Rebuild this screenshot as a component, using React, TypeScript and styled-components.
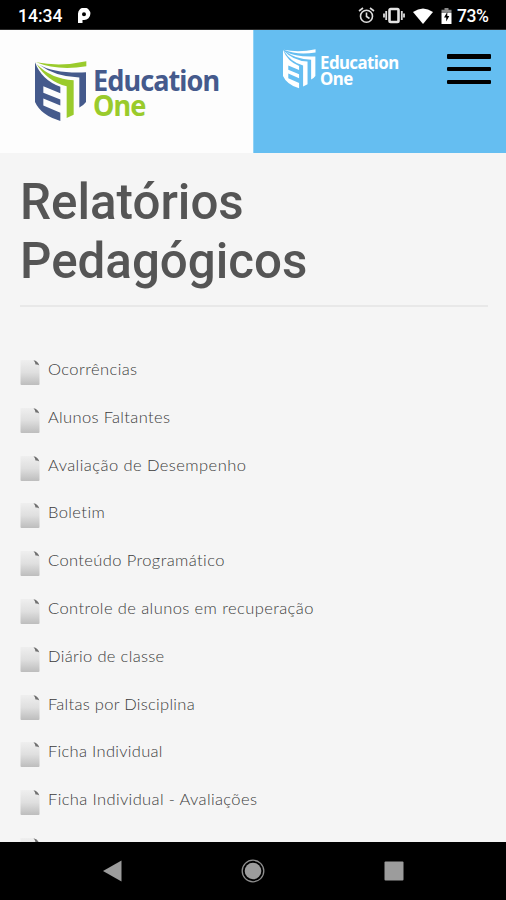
import React from "react";
import styled, { createGlobalStyle } from "styled-components";

const GlobalStyle = createGlobalStyle`
  *, *::before, *::after { box-sizing: border-box; }
  html, body { margin: 0; padding: 0; background: #000; }
  body { font-family: Roboto, "Liberation Sans", sans-serif; }
`;

const Screen = styled.div`
  width: 506px;
  height: 900px;
  display: flex;
  flex-direction: column;
  overflow: hidden;
  background: #f5f5f5;
`;

const StatusBar = styled.div`
  flex: none;
  height: 30px;
  padding: 2px 16px 0 18px;
  display: flex;
  align-items: center;
  justify-content: space-between;
  background: #000;
  border-bottom: 1px solid #2b2b2b;
  color: #fff;
  font-size: 17.5px;
  font-weight: 500;
  line-height: 26px;
`;

const StatusGroup = styled.div<{ $gap?: number }>`
  display: flex;
  align-items: center;
  gap: ${(p) => p.$gap ?? 0}px;
  svg { display: block; }
`;

const Clock = styled.span`
  width: 59px;
`;

const Battery = styled.span`
  width: 33px;
  margin-left: -3px;
  white-space: nowrap;
  letter-spacing: -0.4px;
`;

const Header = styled.header`
  flex: none;
  height: 123px;
  display: grid;
  grid-template-columns: 253px 1fr;
`;

const BrandPane = styled.div`
  background: #fdfdfd;
  padding: 31px 0 0 35px;
`;

const MenuPane = styled.div`
  background: #65bef1;
  padding: 19px 15px 0 29px;
  display: flex;
  align-items: flex-start;
  justify-content: space-between;
  border-left: 1px solid #8fd2f6;
`;

const Brand = styled.div<{ $small?: boolean }>`
  display: flex;
  align-items: flex-start;
  gap: ${(p) => (p.$small ? 4 : 6)}px;
  svg { display: block; }
`;

const BrandName = styled.div<{ $small?: boolean }>`
  font-family: "Noto Sans", "Open Sans", sans-serif;
  font-weight: 700;
  font-size: ${(p) => (p.$small ? 18.6 : 29.3)}px;
  line-height: ${(p) => (p.$small ? 16 : 25)}px;
  letter-spacing: ${(p) => (p.$small ? -0.6 : -1)}px;
  margin-top: ${(p) => (p.$small ? 5 : 7)}px;
  color: ${(p) => (p.$small ? "#fff" : "#455a8c")};
  white-space: nowrap;
  transform: scaleX(${(p) => (p.$small ? 0.905 : 0.925)});
  transform-origin: left top;
  span { display: block; }
  span + span { color: ${(p) => (p.$small ? "#fff" : "#9acb2c")}; }
`;

const MenuButton = styled.button`
  width: 44px;
  height: 30px;
  margin-top: 5px;
  padding: 0;
  border: 0;
  background: none;
  display: flex;
  flex-direction: column;
  justify-content: space-between;
`;

const MenuLine = styled.span`
  width: 44px;
  height: 4.5px;
  border-radius: 1px;
  background: #000;
`;

const Content = styled.main`
  flex: 1;
  min-height: 0;
  overflow: hidden;
  padding: 20px 18px 0 20px;
`;

const Title = styled.h1`
  margin: 0;
  width: 330px;
  height: 132px;
  font-size: 49.3px;
  font-weight: 500;
  line-height: 59.3px;
  color: #555;
`;

const Divider = styled.hr`
  margin: 0;
  border: 0;
  height: 2px;
  background: #e8e8e8;
`;

const ReportList = styled.ul`
  list-style: none;
  margin: 50px 0 0;
  padding: 0;
`;

const ReportItem = styled.li`
  height: 47.8px;
  display: flex;
  align-items: flex-start;
  gap: 8px;
  svg { flex: none; display: block; margin-top: 3px; }
`;

const ReportLink = styled.a<{ $track: number }>`
  font-family: Lato, "Open Sans", sans-serif;
  font-weight: 300;
  font-size: 16.5px;
  line-height: 24px;
  letter-spacing: ${(p) => p.$track}px;
  color: #3c3c3c;
  white-space: nowrap;
`;

const NavBar = styled.nav`
  flex: none;
  height: 58px;
  background: #000;
  padding: 0 102px;
  display: flex;
  align-items: center;
  justify-content: space-between;
  svg { display: block; }
`;

function Emblem({ size, navy, green }: { size: [number, number]; navy: string; green: string }) {
  return (
    <svg width={size[0]} height={size[1]} viewBox="32 34 156 184" preserveAspectRatio="none">
      <path fill={navy} d="M32 38Q52 92 108 112V131L57 110V130L108 150V168L57 147V168L108 190V215Q50 198 32 158Z" />
      <path fill={green} d="M35 38Q110 52 186 35V50Q100 64 35 38Z" />
      <path fill={navy} d="M45 45Q90 72 185 68V158Q178 168 165 174V84Q90 80 45 45Z" />
      <path fill={green} d="M36 42Q80 88 148 92V196L127 206V110Q70 96 36 42Z" />
    </svg>
  );
}

function FileIcon() {
  return (
    <svg width="20" height="25" viewBox="0 0 20 25">
      <defs>
        <linearGradient id="sheet" x1="0" y1="0" x2="0" y2="1">
          <stop offset="0" stopColor="#efefef" />
          <stop offset="0.5" stopColor="#dfdfdf" />
          <stop offset="1" stopColor="#bdbdbd" />
        </linearGradient>
      </defs>
      <path fill="url(#sheet)" d="M1 0H13.5L19.5 6V24Q19.5 25 18.5 25H1.5Q.5 25 .5 24V.5Z" />
      <path fill="#707070" d="M13.5 0.3Q18 1 19.3 5.5Q17.5 4.2 15.5 4.6Q15.4 2 13.5 .3Z" />
    </svg>
  );
}

const reports: [string, number][] = [
  ["Ocorrências", 0.4],
  ["Alunos Faltantes", 0.34],
  ["Avaliação de Desempenho", 0.44],
  ["Boletim", 0.4],
  ["Conteúdo Programático", 0.39],
  ["Controle de alunos em recuperação", 0.41],
  ["Diário de classe", 0.32],
  ["Faltas por Disciplina", 0.28],
  ["Ficha Individual", 0.3],
  ["Ficha Individual - Avaliações", 0.37],
  ["Fichas de Recuperação", 0.4],
];

export default function App() {
  return (
    <Screen>
      <GlobalStyle />
      <StatusBar>
        <StatusGroup>
          <Clock>14:34</Clock>
          <svg width="14" height="16" viewBox="0 0 14 16">
            <path fill="#fff" fillRule="evenodd" d="M1 15V6A6.2 6.2 0 1 1 7 12H5.5V15ZM7 4.2A2 2 0 1 0 7 8.2A2 2 0 0 0 7 4.2Z" />
          </svg>
        </StatusGroup>
        <StatusGroup $gap={8}>
          <svg width="17" height="17" viewBox="0 0 17 17" fill="none" stroke="#ddd" strokeWidth="1.6">
            <circle cx="8.5" cy="9.2" r="6" />
            <path d="M1 4L5 1M16 4L12 1M8.5 5.5V9.5L11.5 11.5" />
          </svg>
          <svg width="22" height="17" viewBox="0 0 22 17">
            <rect x="6.5" y="2" width="9" height="13" rx="1.2" fill="none" stroke="#e4e4e4" strokeWidth="2.6" />
            <path d="M3.2 4V13M18.8 4V13M1 6.5V10.5M21 6.5V10.5" stroke="#ddd" strokeWidth="1.8" />
          </svg>
          <svg width="20" height="16" viewBox="0 0 20 16">
            <path fill="#fff" d="M0 4Q10-3 20 4L10 16Z" />
          </svg>
          <svg width="11" height="16" viewBox="0 0 11 16">
            <path fill="#8a8a8a" d="M3.5 0H7.5V1.8H10.5V5H.5V1.8H3.5Z" />
            <path fill="#fff" d="M.5 5H10.5V16H.5Z" />
            <path fill="#000" d="M6.3 4L3 9.5H5.2V13.5L8.3 8H6.3Z" />
          </svg>
          <Battery>73%</Battery>
        </StatusGroup>
      </StatusBar>
      <Header>
        <BrandPane>
          <Brand>
            <Emblem size={[52, 61]} navy="#455a8c" green="#9acb2c" />
            <BrandName>
              <span>Education</span>
              <span>One</span>
            </BrandName>
          </Brand>
        </BrandPane>
        <MenuPane>
          <Brand $small>
            <Emblem size={[33, 40]} navy="#fff" green="#fff" />
            <BrandName $small>
              <span>Education</span>
              <span>One</span>
            </BrandName>
          </Brand>
          <MenuButton aria-label="Menu">
            <MenuLine />
            <MenuLine />
            <MenuLine />
          </MenuButton>
        </MenuPane>
      </Header>
      <Content>
        <Title>Relatórios Pedagógicos</Title>
        <Divider />
        <ReportList>
          {reports.map(([name, track]) => (
            <ReportItem key={name}>
              <FileIcon />
              <ReportLink $track={track}>{name}</ReportLink>
            </ReportItem>
          ))}
        </ReportList>
      </Content>
      <NavBar>
        <svg width="20" height="22" viewBox="0 0 20 22">
          <path fill="#9c9c9c" d="M1 11L19.5 0.5V21.5Z" />
        </svg>
        <svg width="24" height="24" viewBox="0 0 24 24">
          <circle cx="12" cy="12" r="10.8" fill="none" stroke="#8e8e8e" strokeWidth="1.3" />
          <circle cx="12" cy="12" r="8.3" fill="#9c9c9c" />
        </svg>
        <svg width="20" height="20" viewBox="0 0 20 20">
          <rect x=".5" y=".5" width="19" height="19" rx="1" fill="#9c9c9c" />
        </svg>
      </NavBar>
    </Screen>
  );
}
